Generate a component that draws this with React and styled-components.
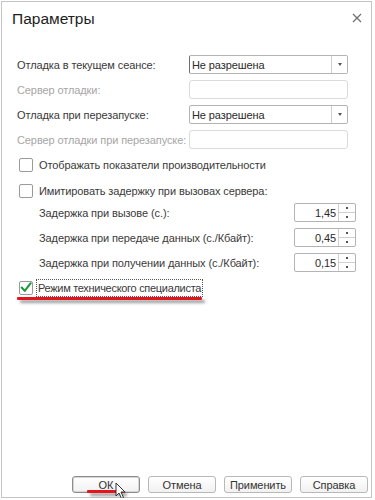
import React from 'react';
import styled, { createGlobalStyle } from 'styled-components';

const GlobalStyle = createGlobalStyle`
    html, body {
        margin: 0;
        padding: 0;
        background: #ffffff;
    }
    body {
        font-family: "Liberation Sans", Arial, sans-serif;
        font-size: 11px;
        letter-spacing: -0.1px;
        color: #3a3a3a;
    }
`;

const App = () => {
    return (
        <>
            <GlobalStyle />
            <Window>
                <Header>
                    <Title>Параметры</Title>
                    <CloseButton aria-label="close">
                        <svg width="10" height="10" viewBox="0 0 10 10">
                            <path d="M1 1 L9 9 M9 1 L1 9" stroke="#6e6e6e" strokeWidth="1.2" />
                        </svg>
                    </CloseButton>
                </Header>

                <Form>
                    <FieldRow>
                        <Label>Отладка в текущем сеансе:</Label>
                        <Select $focused>
                            <SelectValue>Не разрешена</SelectValue>
                            <SelectButton><Arrow /></SelectButton>
                        </Select>
                    </FieldRow>
                    <FieldRow>
                        <Label $disabled>Сервер отладки:</Label>
                        <Input />
                    </FieldRow>
                    <FieldRow>
                        <Label>Отладка при перезапуске:</Label>
                        <Select>
                            <SelectValue>Не разрешена</SelectValue>
                            <SelectButton><Arrow /></SelectButton>
                        </Select>
                    </FieldRow>
                    <FieldRow>
                        <Label $disabled>Сервер отладки при перезапуске:</Label>
                        <Input />
                    </FieldRow>

                    <CheckRow>
                        <Checkbox />
                        <CheckText>Отображать показатели производительности</CheckText>
                    </CheckRow>
                    <CheckRow $mt={7}>
                        <Checkbox />
                        <CheckText>Имитировать задержку при вызовах сервера:</CheckText>
                    </CheckRow>

                    <SpinRow $mt={3}>
                        <SpinLabel>Задержка при вызове (с.):</SpinLabel>
                        <Spin value="1,45" />
                    </SpinRow>
                    <SpinRow>
                        <SpinLabel>Задержка при передаче данных (с./Кбайт):</SpinLabel>
                        <Spin value="0,45" />
                    </SpinRow>
                    <SpinRow>
                        <SpinLabel>Задержка при получении данных (с./Кбайт):</SpinLabel>
                        <Spin value="0,15" />
                    </SpinRow>

                    <CheckRow>
                        <Checkbox $checked>
                            <svg width="14" height="13" viewBox="0 0 14 13">
                                <path d="M2 6.5 L5.5 10.5 L12.5 1.5" fill="none" stroke="#1f9a3a" strokeWidth="2.4" strokeLinecap="round" strokeLinejoin="round" />
                            </svg>
                        </Checkbox>
                        <FocusText>Режим технического специалиста</FocusText>
                        <Underline $left={0} $width={185} $top={19} />
                    </CheckRow>
                </Form>

                <Footer>
                    <Button $default>
                        ОК
                        <Underline $left={14} $width={37} $top={13} />
                        <Cursor>
                            <svg width="12" height="18" viewBox="0 0 12 18">
                                <path d="M1 1 L1 14 L4 11 L6.5 16.5 L8.5 15.5 L6 10 L10 10 Z" fill="#ffffff" stroke="#333" strokeWidth="1" strokeLinejoin="round" />
                            </svg>
                        </Cursor>
                    </Button>
                    <Button>Отмена</Button>
                    <Button>Применить</Button>
                    <Button>Справка</Button>
                </Footer>
            </Window>
        </>
    );
};

const Spin = ({ value }) => (
    <SpinBox>
        <SpinValue>{value}</SpinValue>
        <SpinButtons>
            <SpinHalf><Dot /></SpinHalf>
            <SpinHalf $bottom><Dot /></SpinHalf>
        </SpinButtons>
    </SpinBox>
);

export default App;

const Window = styled.div`
    margin: 1px 0 0 1px;
    width: 369px;
    height: 495px;
    border: 1px solid #c4c4c4;
    background: #ffffff;
    display: flex;
    flex-direction: column;
`;

const Header = styled.div`
    height: 32px;
    display: flex;
    align-items: center;
    justify-content: space-between;
    padding: 0 8px 0 10px;
`;

const Title = styled.div`
    font-size: 15.5px;
    letter-spacing: 0;
    color: #1e1e1e;
    margin-top: 1px;
`;

const CloseButton = styled.div`
    width: 12px;
    height: 12px;
    display: flex;
    align-items: center;
    justify-content: center;
`;

const Form = styled.div`
    flex: 1;
    padding: 21px 19px 0 15px;
    display: flex;
    flex-direction: column;
    gap: 6px;
`;

const FieldRow = styled.div`
    display: grid;
    grid-template-columns: 172px 159px;
    align-items: center;
    height: 19px;
`;

const Label = styled.div`
    color: ${p => (p.$disabled ? '#a6a6a6' : '#3a3a3a')};
    white-space: nowrap;
`;

const Select = styled.div`
    height: 19px;
    box-sizing: border-box;
    border: 1px solid #b4b4b4;
    border-left-color: ${p => (p.$focused ? '#707070' : '#b4b4b4')};
    border-radius: 2px;
    display: flex;
    align-items: stretch;
`;

const SelectValue = styled.div`
    flex: 1;
    display: flex;
    align-items: center;
    padding-left: 2px;
    color: #2a2a2a;
`;

const SelectButton = styled.div`
    width: 15px;
    border-left: 1px solid #cfcfcf;
    display: flex;
    align-items: center;
    justify-content: center;
`;

const Arrow = styled.span`
    width: 0;
    height: 0;
    border-left: 2.5px solid transparent;
    border-right: 2.5px solid transparent;
    border-top: 3px solid #555;
`;

const Input = styled.div`
    height: 19px;
    box-sizing: border-box;
    border: 1px solid #dadada;
    border-radius: 3px;
`;

const CheckRow = styled.div`
    position: relative;
    display: flex;
    align-items: center;
    height: 19px;
    padding-left: 2px;
    margin-top: ${p => (p.$mt ? `${p.$mt - 6}px` : '0')};
`;

const Checkbox = styled.div`
    width: 14px;
    height: 14px;
    box-sizing: border-box;
    border: 1px solid #9a9a9a;
    border-radius: 2px;
    background: #fff;
    display: flex;
    align-items: center;
    justify-content: center;
    margin-right: ${p => (p.$checked ? '3px' : '6px')};

    svg {
        margin-top: -1px;
    }
`;

const CheckText = styled.span`
    white-space: nowrap;
`;

const FocusText = styled.span`
    white-space: nowrap;
    letter-spacing: -0.3px;
    border: 1px dotted #555;
    padding: 1px 1px 1px 1px;
    line-height: 14px;
`;

const Underline = styled.span`
    position: absolute;
    left: ${p => p.$left}px;
    top: ${p => p.$top}px;
    width: ${p => p.$width}px;
    height: 3px;
    background: #e5131b;
    border-radius: 1px;
    box-shadow: 3px 3px 3px rgba(0, 0, 0, 0.4);
`;

const SpinRow = styled.div`
    display: flex;
    align-items: center;
    justify-content: space-between;
    height: 19px;
    padding-left: 22px;
    margin-right: -4px;
    margin-top: ${p => (p.$mt ? `${p.$mt - 6}px` : '0')};
`;

const SpinLabel = styled.div`
    white-space: nowrap;
`;

const SpinBox = styled.div`
    width: 62px;
    height: 19px;
    box-sizing: border-box;
    border: 1px solid #b4b4b4;
    border-radius: 2px;
    display: flex;
`;

const SpinValue = styled.div`
    flex: 1;
    display: flex;
    align-items: center;
    justify-content: flex-end;
    padding-right: 2px;
    color: #2a2a2a;
`;

const SpinButtons = styled.div`
    width: 16px;
    border-left: 1px solid #cfcfcf;
    display: flex;
    flex-direction: column;
`;

const SpinHalf = styled.div`
    flex: 1;
    display: flex;
    align-items: center;
    justify-content: center;
    border-top: ${p => (p.$bottom ? '1px solid #cfcfcf' : 'none')};
`;

const Dot = styled.span`
    width: 2px;
    height: 2px;
    background: #555;
`;

const Footer = styled.div`
    display: flex;
    justify-content: flex-end;
    gap: 8px;
    padding: 0 3px 4px 0;
`;

const Button = styled.div`
    position: relative;
    width: 68px;
    height: 17px;
    box-sizing: border-box;
    border: 1px solid ${p => (p.$default ? '#8c8c8c' : '#b8b8b8')};
    box-shadow: ${p => (p.$default ? 'inset 0 0 0 1px #d6d6d6' : 'none')};
    border-radius: 3px;
    background: linear-gradient(#ffffff, #f1f1f1);
    display: flex;
    align-items: center;
    justify-content: center;
    color: #333;
`;

const Cursor = styled.span`
    position: absolute;
    left: 42px;
    top: 5px;
    line-height: 0;
`;
